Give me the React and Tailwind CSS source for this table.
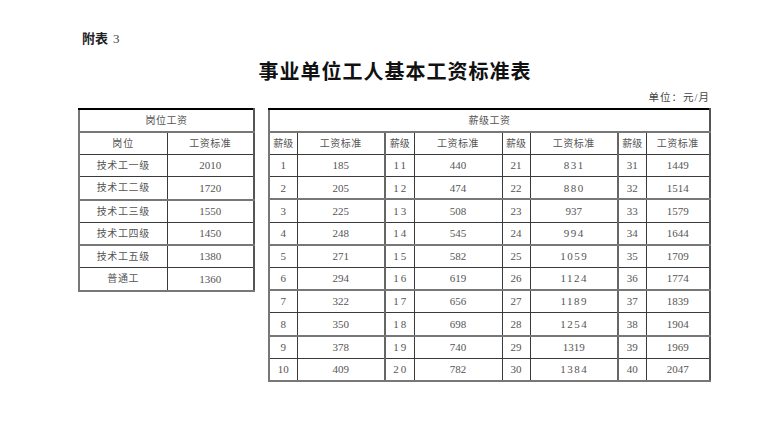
import React from "react";

const CJK = { fontFamily: '"Liberation Serif", "Noto Sans CJK SC", serif' };

const posts = [
  ["技术工一级", "2010"],
  ["技术工二级", "1720"],
  ["技术工三级", "1550"],
  ["技术工四级", "1450"],
  ["技术工五级", "1380"],
  ["普通工", "1360"],
];

const pay = [185, 205, 225, 248, 271, 294, 322, 350, 378, 409, 440, 474, 508, 545, 582, 619, 656, 698, 740, 782, 831, 880, 937, 994, 1059, 1124, 1189, 1254, 1319, 1384, 1449, 1514, 1579, 1644, 1709, 1774, 1839, 1904, 1969, 2047];

const spaced = new Set([831, 880, 994, 1059, 1124, 1189, 1254, 1384]);

const cell = "border border-[#3a3a3a] text-center align-middle p-0 text-[#555]";

export default function App() {
  return (
    <div className="w-[772px] h-[421px] bg-white flex flex-col" style={CJK}>
      <div className="pl-[82px] pt-[31px] h-[50px] text-[13px] text-[#222] leading-[16px]">
        <span className="font-bold">附表</span>
        <span className="ml-[5px] text-[#444]">3</span>
      </div>
      <div className="h-[36px] pt-[10px] flex justify-center items-start">
        <span className="text-[20px] font-bold text-[#111] leading-[24px] tracking-[1px] ml-[18px]">事业单位工人基本工资标准表</span>
      </div>
      <div className="h-[22px] flex justify-end pr-[62px] items-start pt-[6px]">
        <span className="text-[10.5px] leading-[12px] text-[#444] tracking-[1px]">单位：元/月</span>
      </div>
      <div className="flex items-start pl-[78px] gap-[13px]">
        <table className="border-collapse table-fixed border-2 border-l-[#777] border-t-black border-r-[#555] border-b-[#555]" style={{ width: 175 }}>
          <colgroup>
            <col style={{ width: 88 }} />
            <col style={{ width: 87 }} />
          </colgroup>
          <tbody>
            <tr className="h-[23px]">
              <td colSpan={2} className={`${cell} text-[10px] tracking-[0.5px] border-b-2 border-b-[#777]`}>岗位工资</td>
            </tr>
            <tr className="h-[22px]">
              <td className={`${cell} text-[10px] tracking-[1px]`}>岗位</td>
              <td className={`${cell} text-[10px] tracking-[0.5px]`}>工资标准</td>
            </tr>
            {posts.map(([n, v], i) => (
              <tr key={n} className={i % 2 ? "h-[23px]" : "h-[22.5px]"}>
                <td className={`${cell} text-[10px] tracking-[0.6px] ${i % 2 ? "border-b-2 border-b-[#777]" : ""}`}>{n}</td>
                <td className={`${cell} text-[11px] ${i % 2 ? "border-b-2 border-b-[#777]" : ""}`}>{v}</td>
              </tr>
            ))}
          </tbody>
        </table>
        <table className="border-collapse table-fixed border-2 border-l-[#777] border-t-black border-r-[#555] border-b-black" style={{ width: 441 }}>
          <colgroup>
            {[28, 88, 29, 88, 28, 88, 28, 64].map((w, i) => (
              <col key={i} style={{ width: w }} />
            ))}
          </colgroup>
          <tbody>
            <tr className="h-[23px]">
              <td colSpan={8} className={`${cell} text-[10px] tracking-[0.5px] border-b-2 border-b-[#777]`}>薪级工资</td>
            </tr>
            <tr className="h-[22px]">
              {[0, 1, 2, 3].map((g) => (
                <React.Fragment key={g}>
                  <td className={`${cell} text-[10px] ${g === 1 || g === 3 ? "border-l-2 border-l-[#666]" : ""}`}>薪级</td>
                  <td className={`${cell} text-[10px] tracking-[0.5px]`}>工资标准</td>
                </React.Fragment>
              ))}
            </tr>
            {Array.from({ length: 10 }).map((_, r) => (
              <tr key={r} className="h-[22.7px]">
                {[0, 1, 2, 3].map((g) => {
                  const lvl = g * 10 + r + 1;
                  const v = pay[lvl - 1];
                  const rb = r % 2 ? "border-b-2 border-b-[#777]" : "";
                  return (
                    <React.Fragment key={g}>
                      <td className={`${cell} text-[11px] ${g === 1 ? "tracking-[2px] pl-[2px]" : ""} ${g === 1 || g === 3 ? "border-l-2 border-l-[#666]" : ""} ${rb}`}>{lvl}</td>
                      <td className={`${cell} text-[11px] ${spaced.has(v) ? "tracking-[1.5px] pl-[1px]" : ""} ${rb}`}>{v}</td>
                    </React.Fragment>
                  );
                })}
              </tr>
            ))}
          </tbody>
        </table>
      </div>
    </div>
  );
}
